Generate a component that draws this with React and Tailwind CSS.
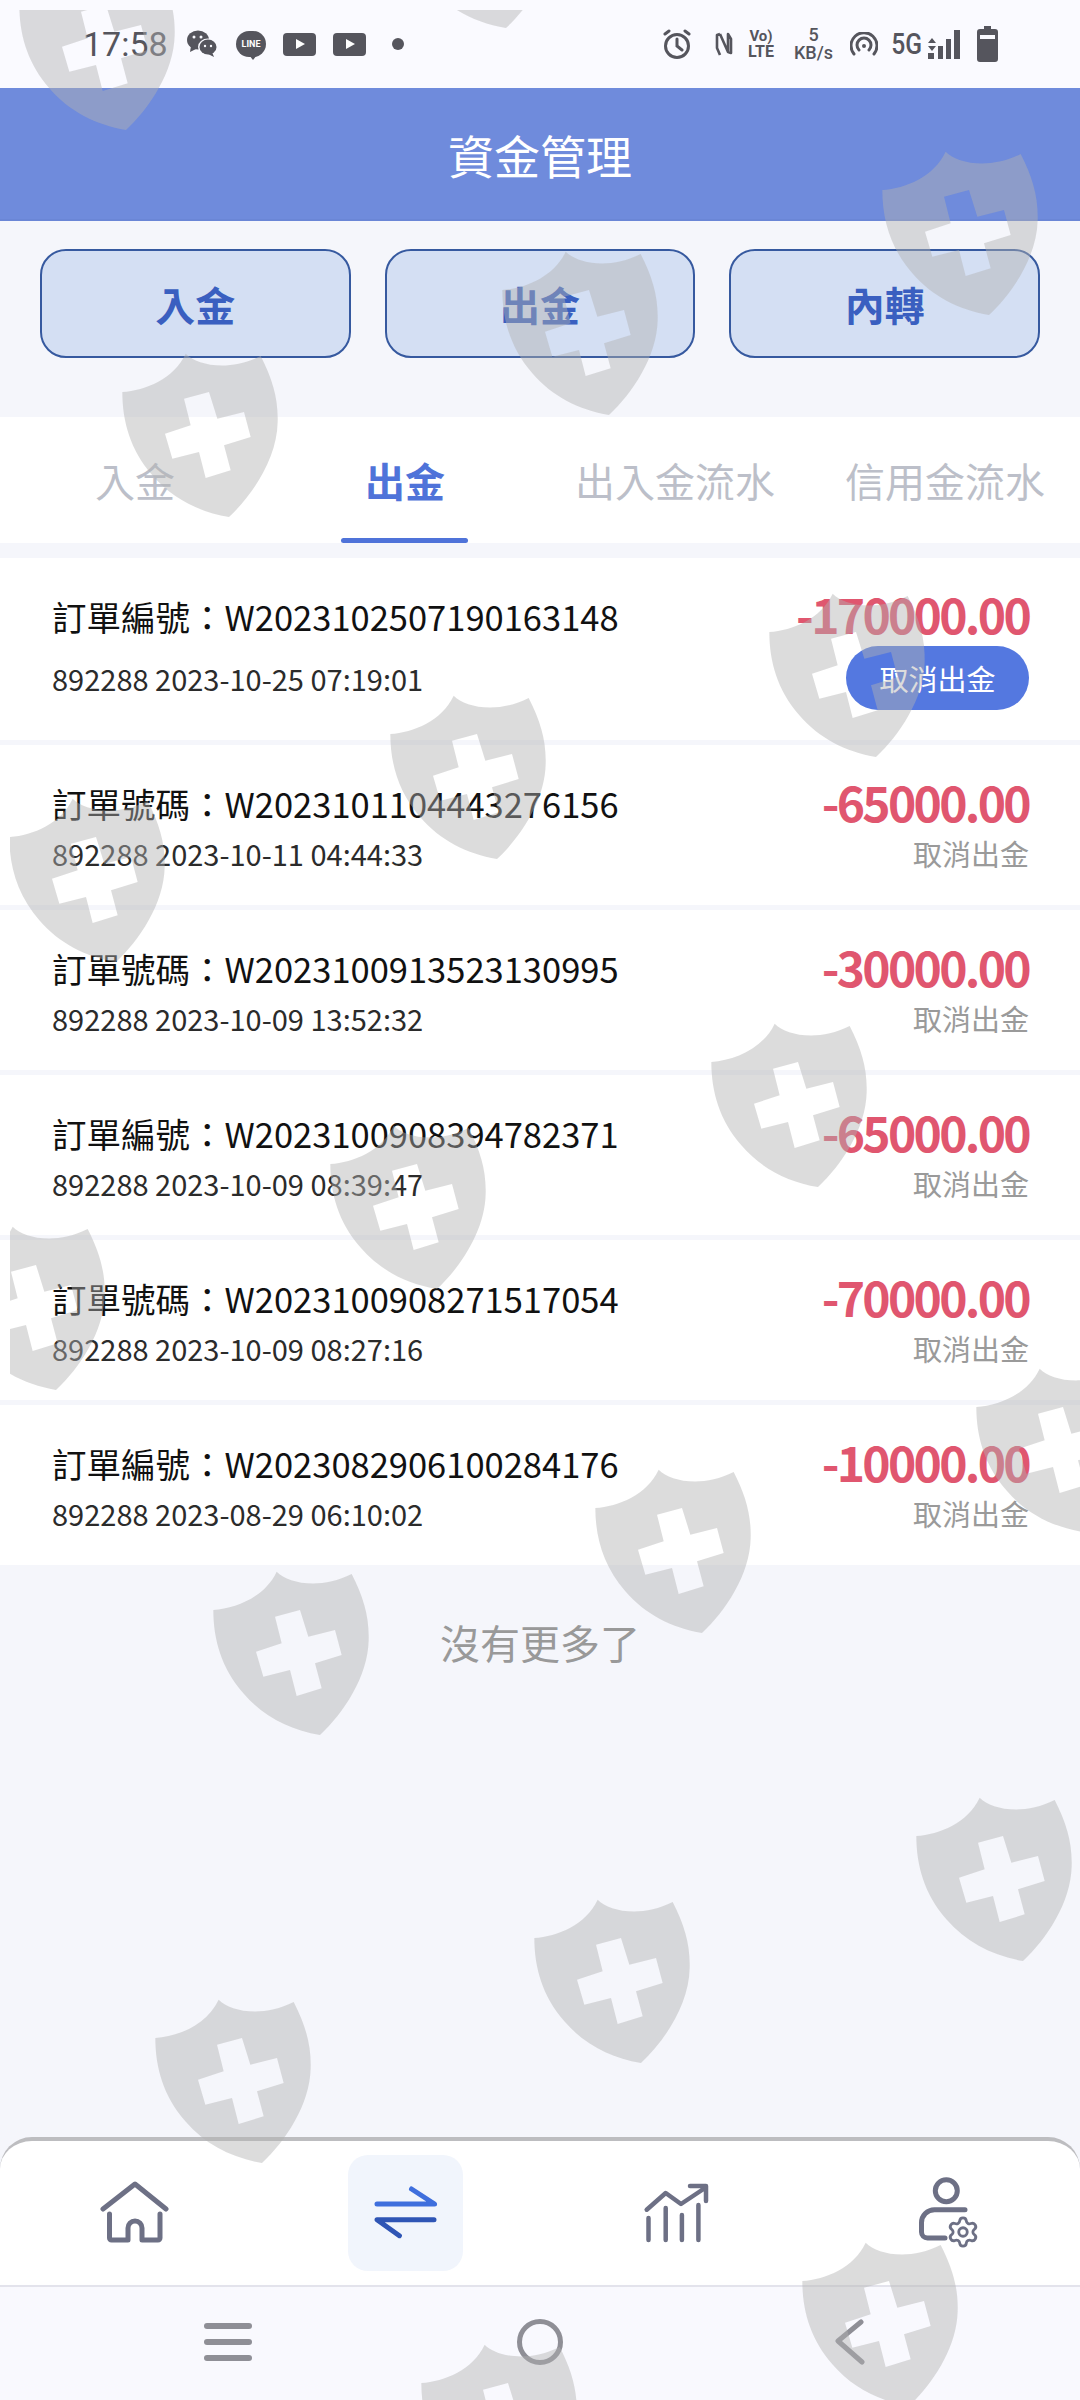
import { Settings } from 'lucide-react'

const cjk = "font-['Noto_Sans_CJK_TC','Noto_Sans',sans-serif]"

const shields = [
  [97, 48], [477, -54], [960, 233], [580, 333], [200, 435], [847, 675], [468, 777], [87, 880],
  [789, 1105], [408, 1207], [27, 1308], [1054, 1450], [673, 1551], [291, 1653], [994, 1879],
  [612, 1981], [233, 2081], [880, 2324], [499, 2426],
]

const orders = [
  { label: '訂單號碼', no: 'W2023101104443276156', time: '892288 2023-10-11 04:44:33', amount: '-65000.00' },
  { label: '訂單號碼', no: 'W2023100913523130995', time: '892288 2023-10-09 13:52:32', amount: '-30000.00' },
  { label: '訂單編號', no: 'W2023100908394782371', time: '892288 2023-10-09 08:39:47', amount: '-65000.00' },
  { label: '訂單號碼', no: 'W2023100908271517054', time: '892288 2023-10-09 08:27:16', amount: '-70000.00' },
  { label: '訂單編號', no: 'W2023082906100284176', time: '892288 2023-08-29 06:10:02', amount: '-10000.00' },
]

function Shield({ x, y }) {
  return (
    <svg className="absolute" style={{ left: x - 121, top: y - 103 }} width="240" height="200" viewBox="0 0 720 600">
      <path
        fill="rgb(178 178 178 / 0.45)"
        fillRule="evenodd"
        d="M100 150C170 145 255 110 290 35C325 70 420 90 515 42C550 110 568 170 566 240C564 350 490 460 420 525C330 510 250 470 190 400C125 325 100 240 100 150ZM285 170L360 150L385 230L465 210L485 285L405 310L425 385L350 408L330 330L250 350L228 275L305 250Z"
      />
    </svg>
  )
}

function StatusBar() {
  return (
    <div className="flex h-[88px] shrink-0 items-center justify-between bg-[#fafaff] pl-[83px] pr-[82px] text-[#55555d]">
      <div className="flex items-center">
        <span className="w-[83px] font-['Roboto',sans-serif] text-[34px] leading-none">17:58</span>
        <svg className="ml-[21px]" width="31" height="28" viewBox="0 0 31 28" fill="currentColor">
          <ellipse cx="11" cy="10" rx="11" ry="9.5" />
          <path d="M4 16l-1 6 6-3z" />
          <ellipse cx="21" cy="17" rx="10" ry="8.5" fill="#fafaff" />
          <ellipse cx="21" cy="17" rx="8.5" ry="7.5" />
          <path d="M25 22l2 5-6-3z" />
          <circle cx="7" cy="7" r="1.5" fill="#fafaff" />
          <circle cx="14" cy="7" r="1.5" fill="#fafaff" />
          <circle cx="18" cy="16" r="1.2" fill="#fafaff" />
          <circle cx="24" cy="16" r="1.2" fill="#fafaff" />
        </svg>
        <div className="relative ml-[18px] flex h-[26px] w-[30px] items-center justify-center rounded-full bg-[#55555d]">
          <span className="font-['Roboto',sans-serif] text-[9px] font-bold leading-none text-white">LINE</span>
          <span className="absolute left-[13px] top-[24px] h-0 w-0 border-x-[4px] border-t-[5px] border-x-transparent border-t-[#55555d]" />
        </div>
        <div className="ml-[17px] flex h-[23px] w-[33px] items-center justify-center rounded-[4px] bg-[#55555d]">
          <span className="ml-[1px] h-0 w-0 border-y-[5px] border-l-[9px] border-y-transparent border-l-white" />
        </div>
        <div className="ml-[17px] flex h-[23px] w-[33px] items-center justify-center rounded-[4px] bg-[#55555d]">
          <span className="ml-[1px] h-0 w-0 border-y-[5px] border-l-[9px] border-y-transparent border-l-white" />
        </div>
        <span className="ml-[26px] h-[12px] w-[12px] rounded-full bg-[#55555d]" />
      </div>
      <div className="flex items-center">
        <svg width="28" height="31" viewBox="0 0 28 31" fill="none" stroke="currentColor" strokeWidth="3" strokeLinecap="round">
          <circle cx="14" cy="17" r="11.5" />
          <path d="M14 10v7l5 4M2 5l4-3M26 5l-4-3" />
        </svg>
        <svg className="ml-[24px]" width="18" height="26" viewBox="0 0 18 26" fill="none" stroke="currentColor" strokeWidth="2.6" strokeLinejoin="round">
          <path d="M5 3L2 4v13l3 7M5 3l8 18M13 3l3 5v14l-3-1V3z" />
        </svg>
        <div className="ml-[14px] flex w-[28px] flex-col items-center font-['Roboto',sans-serif] text-[15px] font-bold leading-[15px]">
          <span>Vo)</span>
          <span className="text-[16px]">LTE</span>
        </div>
        <div className="ml-[18px] flex w-[41px] flex-col items-center font-['Roboto',sans-serif] text-[18px] font-medium leading-[18px]">
          <span>5</span>
          <span>KB/s</span>
        </div>
        <svg className="ml-[16px]" width="28" height="25" viewBox="0 0 28 25" fill="none" stroke="currentColor" strokeWidth="3" strokeLinecap="round">
          <path d="M4 22a13 13 0 1 1 20 0M9 18a7 7 0 1 1 10 0" />
          <circle cx="14" cy="14" r="2" fill="currentColor" stroke="none" />
        </svg>
        <span className="ml-[11px] w-[29px] font-['Roboto',sans-serif] text-[29px] font-medium leading-none [transform:scaleX(0.85)]">5G</span>
        <svg className="ml-[10px]" width="32" height="29" viewBox="0 0 32 29" fill="currentColor">
          <path d="M4 8l4 5H0zM4 21l4-5H0z" />
          <path d="M0 23h6v6H0zM10 16h5v13h-5zM18 9h5v20h-5zM26 0h6v29h-6z" />
        </svg>
        <svg className="ml-[17px]" width="21" height="36" viewBox="0 0 21 36" fill="currentColor">
          <path d="M7 0h7v3h4a3 3 0 0 1 3 3v27a3 3 0 0 1-3 3H3a3 3 0 0 1-3-3V6a3 3 0 0 1 3-3h4z" />
          <rect x="3" y="9" width="15" height="4" fill="#fafaff" />
        </svg>
      </div>
    </div>
  )
}

function NavBar() {
  return (
    <div className="mt-auto shrink-0">
      <div className="flex h-[148px] items-center rounded-t-[32px] border-t-[4px] border-[#bdbdc0] bg-white">
        <div className="flex w-[270px] justify-center">
          <svg width="70" height="65" viewBox="0 0 70 65" fill="none" stroke="#6d7085" strokeWidth="5" strokeLinecap="round" strokeLinejoin="round">
            <path d="M3 28L35 3L66 28" />
            <path d="M9.5 33V57a2 2 0 0 0 2 2H28V47a7 7 0 0 1 14 0V59H58a2 2 0 0 0 2-2V33" />
          </svg>
        </div>
        <div className="flex w-[270px] justify-center">
          <div className="flex h-[116px] w-[115px] items-center justify-center rounded-[20px] bg-[#f1f5fc]">
            <svg width="70" height="58" viewBox="0 0 70 58" fill="none" strokeWidth="5" strokeLinecap="round" strokeLinejoin="round">
              <path d="M7 20H64.6L41.5 5" stroke="#3f6fdd" />
              <path d="M64 35.7H7L29.4 51.7" stroke="#2f55b5" />
            </svg>
          </div>
        </div>
        <div className="flex w-[270px] justify-center pl-[5px]">
          <svg width="75" height="65" viewBox="0 0 75 65" fill="none" stroke="#6d7085" strokeWidth="4.5" strokeLinecap="round" strokeLinejoin="round">
            <path d="M8.5 37V59M25.7 27V59M41.9 34V59M58.4 24V59" />
            <path d="M6.7 28.7L25.7 12L41 23L65 7M50 5H66V20" />
          </svg>
        </div>
        <div className="flex w-[270px] justify-center pl-[10px]">
          <svg width="70" height="80" viewBox="0 0 70 80" fill="none" stroke="#6d7085" strokeWidth="5" strokeLinecap="round" strokeLinejoin="round">
            <circle cx="31.3" cy="17.7" r="11" />
            <path d="M50 36.7H19.5a13 13 0 0 0-13 13V59a6 6 0 0 0 6 6H30" />
            <Settings x="31" y="42" width="34" height="34" strokeWidth="2" color="#6d7085" />
          </svg>
        </div>
      </div>
      <div className="flex h-[115px] items-center justify-center border-t-[2px] border-[#e3e3ec] bg-[#f9f9fe] pb-[4px]">
        <div className="flex w-[312px] justify-center">
          <div className="flex w-[48px] flex-col gap-[10px]">
            <span className="h-[6px] rounded-full bg-[#8f8f96]" />
            <span className="h-[6px] rounded-full bg-[#8f8f96]" />
            <span className="h-[6px] rounded-full bg-[#8f8f96]" />
          </div>
        </div>
        <div className="flex w-[312px] justify-center">
          <span className="h-[46px] w-[46px] rounded-full border-[5px] border-[#8f8f96]" />
        </div>
        <div className="flex w-[312px] justify-center pr-[4px]">
          <svg width="34" height="46" viewBox="0 0 34 46" fill="none" stroke="#8f8f96" strokeWidth="5" strokeLinecap="round" strokeLinejoin="round">
            <path d="M28 3L5 22L29 43" />
          </svg>
        </div>
      </div>
    </div>
  )
}

export default function App() {
  const tabs = ['入金', '出金', '出入金流水', '信用金流水']
  const actions = ['入金', '出金', '內轉']

  return (
    <div className={`relative flex h-[2400px] w-[1080px] flex-col overflow-hidden bg-[#f5f6fb] ${cjk}`}>
      <StatusBar />
      <header className="flex h-[133px] shrink-0 items-center justify-center border-b-[2px] border-[#6a86d6] bg-[#6f8bdc] text-[46px] leading-none text-white">
        資金管理
      </header>

      <div className="flex gap-[34px] px-[40px] pt-[28px]">
        {actions.map((a) => (
          <div key={a} className="flex h-[109px] w-[311px] items-center justify-center rounded-[26px] border-[2px] border-[#36599f] bg-[#d4dff3] text-[40px] font-bold text-[#3a5fc0]">
            {a}
          </div>
        ))}
      </div>

      <div className="mt-[59px] grid h-[126px] grid-cols-4 bg-white">
        {tabs.map((t, i) => (
          <div key={t} className={`relative flex items-center justify-center text-[40px] ${i === 1 ? 'font-bold text-[#4f73d9]' : 'text-[#bcbfc9]'}`}>
            {t}
            {i === 1 && <span className="absolute bottom-0 left-[71px] h-[5px] w-[127px] rounded-full bg-[#4f73d9]" />}
          </div>
        ))}
      </div>

      <div className="mt-[15px] flex flex-col gap-[5px]">
        <div className="h-[182px] bg-white pl-[52px] pr-[51px] pt-[33px]">
          <div className="flex h-[50px] items-center justify-between">
            <span className="text-[34.5px] leading-none text-[#111]">訂單編號：W2023102507190163148</span>
            <span className="mb-[6px] text-[48px] font-bold leading-none tracking-[-2.7px] text-[#e0566f]">-170000.00</span>
          </div>
          <div className="mt-[5px] flex h-[64px] items-center justify-between">
            <span className="text-[29px] leading-none text-[#2b2b2b]">892288 2023-10-25 07:19:01</span>
            <span className="flex h-[64px] w-[183px] items-center justify-center rounded-full bg-[#5478e0] text-[29px] leading-none text-white">取消出金</span>
          </div>
        </div>
        {orders.map((o) => (
          <div key={o.no} className="h-[160px] bg-white pl-[52px] pr-[51px] pt-[33px]">
            <div className="flex h-[50px] items-center justify-between">
              <span className="text-[34.5px] leading-none text-[#111]">{o.label}：{o.no}</span>
              <span className="mb-[4px] text-[48px] font-bold leading-none tracking-[-2.7px] text-[#e0566f]">{o.amount}</span>
            </div>
            <div className="flex h-[50px] items-center justify-between">
              <span className="text-[29px] leading-none text-[#2b2b2b]">{o.time}</span>
              <span className="text-[29px] leading-none text-[#9a9a9a]">取消出金</span>
            </div>
          </div>
        ))}
      </div>

      <p className="mt-[49px] text-center text-[40px] leading-[56px] text-[#999]">沒有更多了</p>

      <NavBar />

      <div className="pointer-events-none absolute bottom-0 left-[10px] right-0 top-[10px] z-50 overflow-hidden">
        {shields.map(([x, y]) => (
          <Shield key={`${x}-${y}`} x={x} y={y} />
        ))}
      </div>
    </div>
  )
}
